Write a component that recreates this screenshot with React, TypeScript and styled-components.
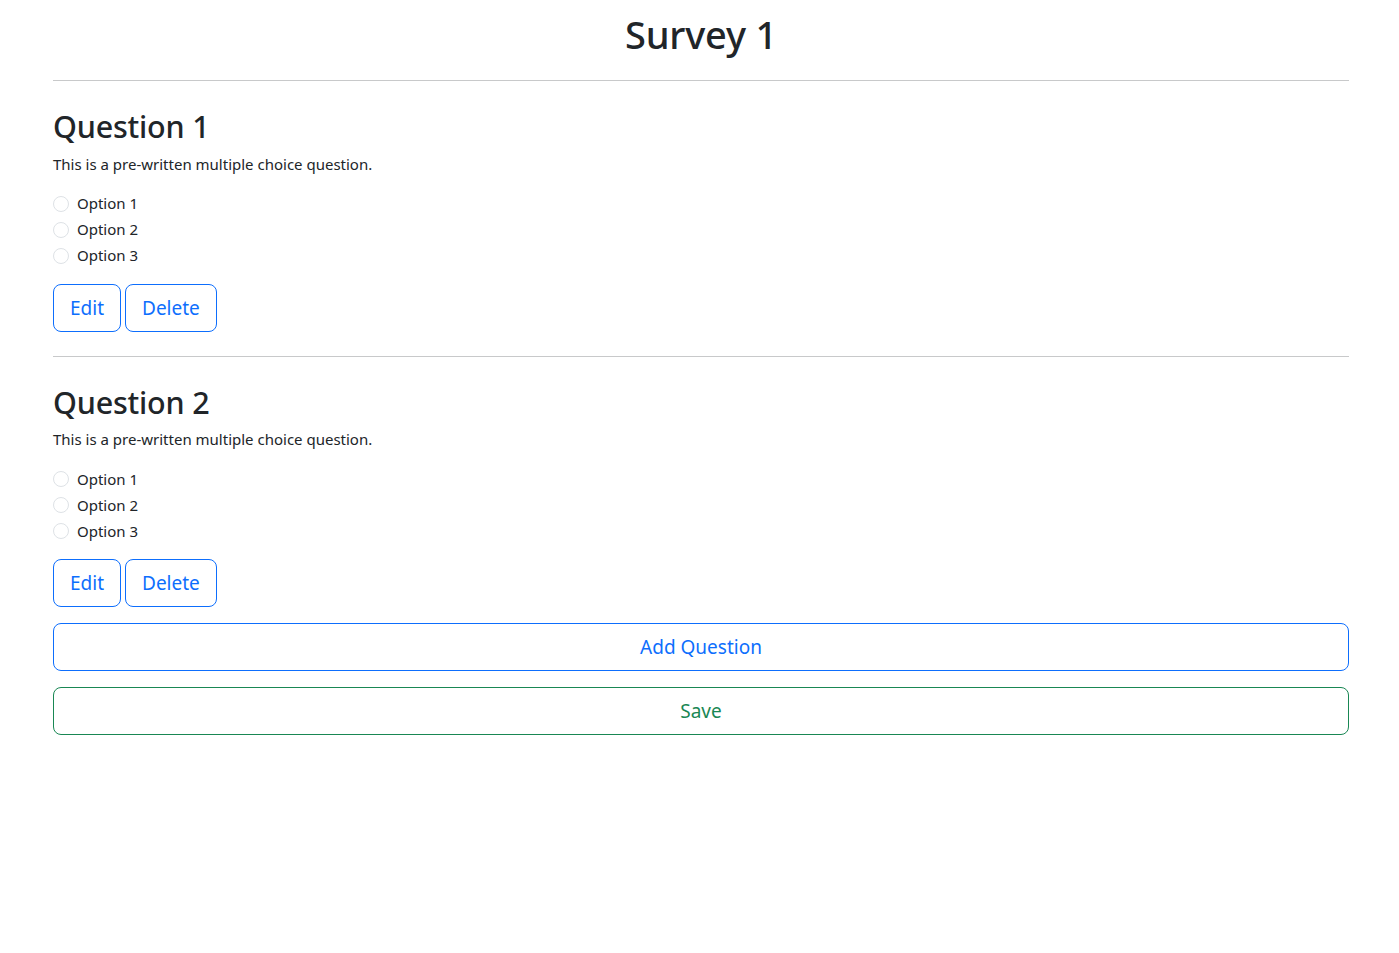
import React from "react";
import styled, { createGlobalStyle } from "styled-components";

const GlobalStyle = createGlobalStyle`
  html, body { margin: 0; padding: 0; background: #fff; }
  body {
    font-family: "Noto Sans", "Open Sans", sans-serif;
    color: #212529;
    font-size: 16px;
    line-height: 1.5;
  }
  * { box-sizing: border-box; }
`;

const Container = styled.main`
  width: 1296px;
  margin: 0 0 0 53px;
  padding-top: 10px;
`;

const Title = styled.h1`
  margin: 0 0 22px;
  font-size: 38px;
  font-weight: 500;
  line-height: 48px;
  text-align: center;
  letter-spacing: -0.2px;
`;

const Divider = styled.hr`
  margin: 0;
  border: 0;
  border-top: 1px solid #c8c9ca;
`;

const QuestionBlock = styled.section<{ $last?: boolean }>`
  display: flex;
  flex-direction: column;
  align-items: flex-start;
  padding: 26px 0 ${(p) => (p.$last ? "0" : "24px")};
`;

const QuestionTitle = styled.h2`
  margin: 0 0 6.5px;
  font-size: 30.5px;
  font-weight: 500;
  line-height: 38px;
  letter-spacing: -0.2px;
`;

const QuestionText = styled.p`
  margin: 0 0 16px;
  font-size: 15px;
  line-height: 24px;
`;

const OptionList = styled.div`
  display: flex;
  flex-direction: column;
  gap: 2px;
  margin-bottom: 16px;
`;

const OptionRow = styled.label`
  display: flex;
  align-items: center;
  gap: 8px;
  height: 24px;
  font-size: 15px;
`;

const Radio = styled.span`
  width: 16px;
  height: 16px;
  border-radius: 50%;
  border: 1px solid #dee2e6;
  background: #fff;
  flex: none;
`;

const ButtonRow = styled.div`
  display: flex;
  gap: 4px;
`;

const OutlineButton = styled.button<{ $tone?: "primary" | "success"; $block?: boolean }>`
  font-family: inherit;
  font-size: 19px;
  line-height: 30px;
  padding: 8px 16px;
  border-radius: 8px;
  background: #fff;
  cursor: pointer;
  border: 1px solid ${(p) => (p.$tone === "success" ? "#198754" : "#0d6efd")};
  color: ${(p) => (p.$tone === "success" ? "#198754" : "#0d6efd")};
  width: ${(p) => (p.$block ? "100%" : "auto")};
`;

const ActionStack = styled.div`
  display: flex;
  flex-direction: column;
  gap: 16px;
  padding-top: 16px;
`;

const questions = [
  { id: 1, title: "Question 1" },
  { id: 2, title: "Question 2" },
];

export default function App() {
  return (
    <>
      <GlobalStyle />
      <Container>
        <Title>Survey 1</Title>
        {questions.map((q, i) => (
          <React.Fragment key={q.id}>
            <Divider />
            <QuestionBlock $last={i === questions.length - 1}>
              <QuestionTitle>{q.title}</QuestionTitle>
              <QuestionText>This is a pre-written multiple choice question.</QuestionText>
              <OptionList>
                {["Option 1", "Option 2", "Option 3"].map((o) => (
                  <OptionRow key={o}>
                    <Radio />
                    {o}
                  </OptionRow>
                ))}
              </OptionList>
              <ButtonRow>
                <OutlineButton>Edit</OutlineButton>
                <OutlineButton>Delete</OutlineButton>
              </ButtonRow>
            </QuestionBlock>
          </React.Fragment>
        ))}
        <ActionStack>
          <OutlineButton $block>Add Question</OutlineButton>
          <OutlineButton $block $tone="success">Save</OutlineButton>
        </ActionStack>
      </Container>
    </>
  );
}
